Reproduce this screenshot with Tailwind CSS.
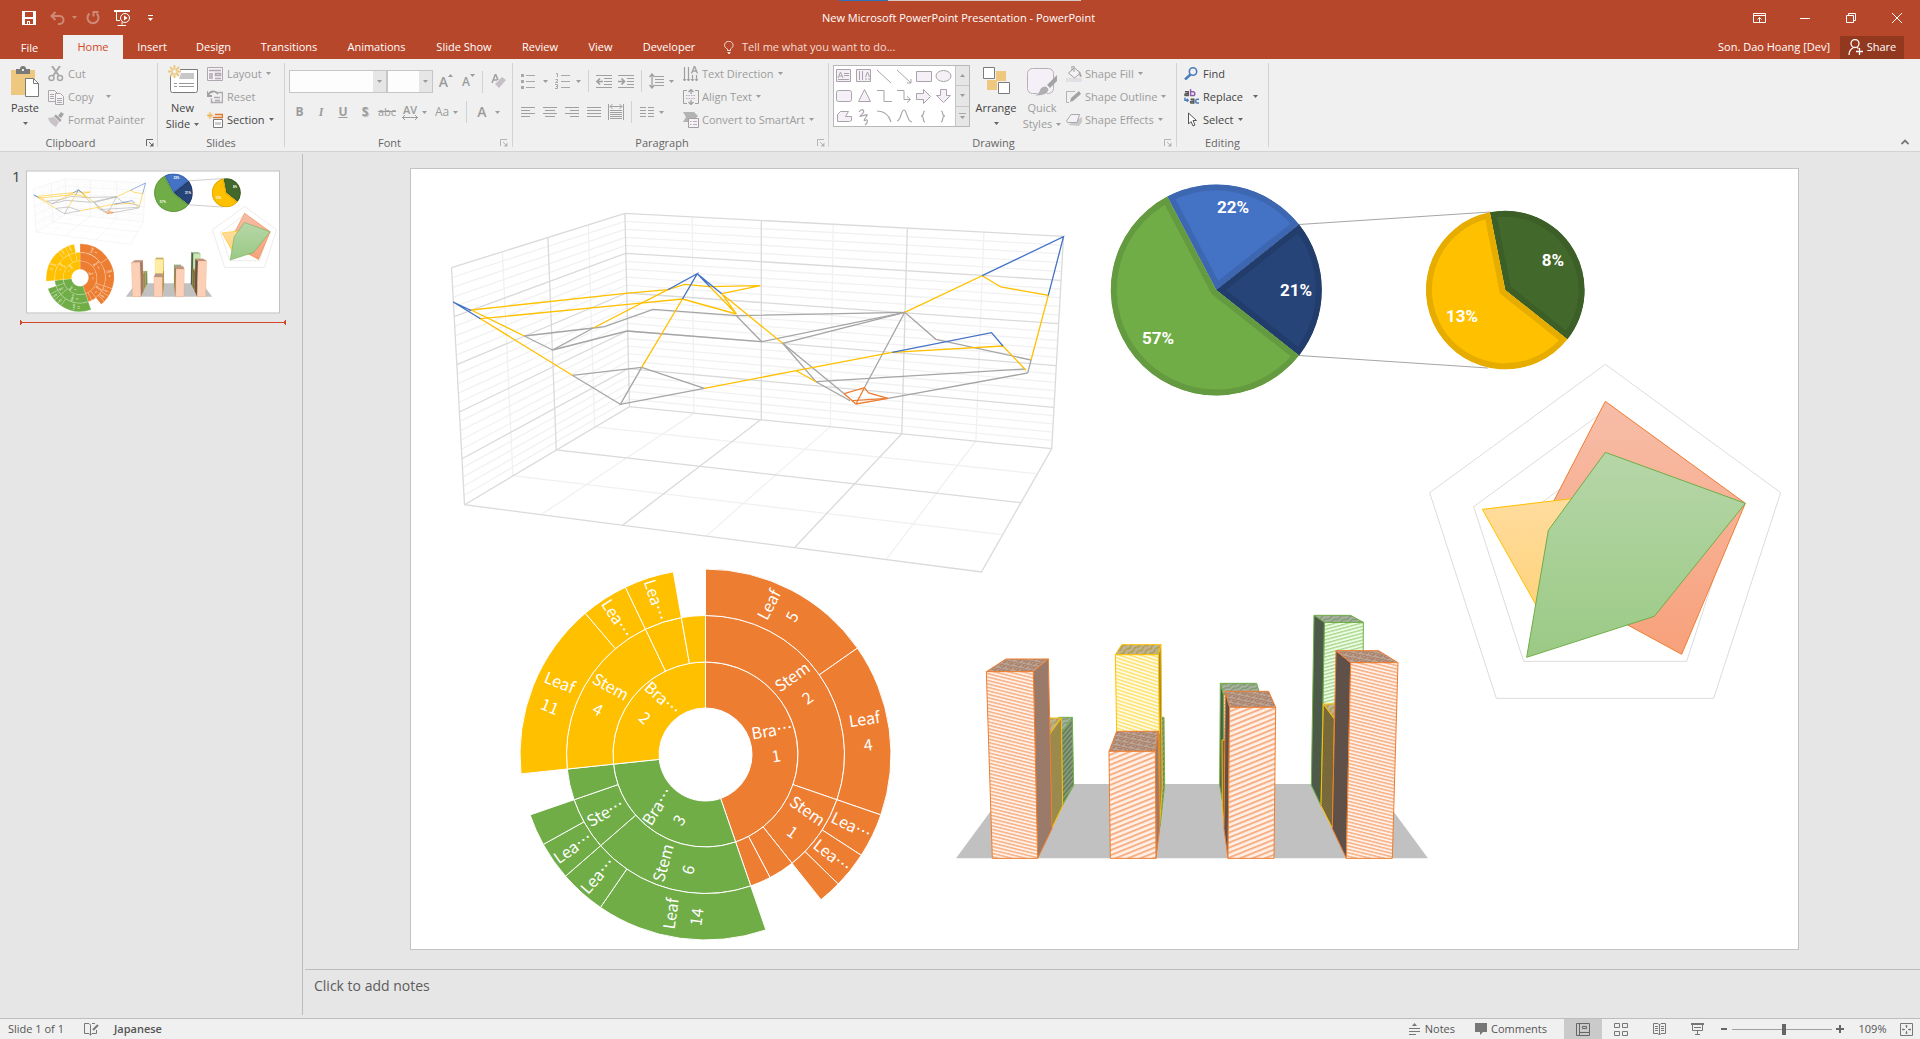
<!DOCTYPE html>
<html lang="en">
<head>
<meta charset="utf-8">
<title>New Microsoft PowerPoint Presentation - PowerPoint</title>
<script src="https://cdn.jsdelivr.net/npm/@tailwindcss/browser@4"></script>
</head>
<body class="flex h-screen flex-col overflow-hidden bg-[#e6e6e6] font-['Open_Sans',sans-serif] text-[11px] leading-4 text-[#444]">

<!-- shared symbols -->
<svg class="absolute size-0" aria-hidden="true">
  <symbol id="caret" viewBox="0 0 5 3"><path d="M0 0h5L2.500 3z" fill="currentColor"/></symbol>
  <symbol id="launch" viewBox="0 0 8 8"><path d="M.5 7V.5H7M3 3l3.500 3.500" fill="none" stroke="currentColor"/><path d="M7.500 3.500v4h-4z" fill="currentColor"/></symbol>
</svg>

<header class="relative bg-[#b7472a] text-white">
  <!-- edge of the hidden screen-sharing bar -->
  <div class="absolute inset-x-0 top-0 flex h-px justify-center"><span class="w-[49px] bg-[#2f6fb7]"></span><span class="w-[193px] bg-[#d8c8c4]"></span></div>
  <div class="flex h-[35px] items-center">
    <div class="flex flex-1 items-center">
      <button aria-label="Save" class="ml-[22px] w-7"><svg class="size-[14px]" viewBox="0 0 14 14"><path d="M0 0h14v14H0z" fill="#fff"/><path d="M3 1h8v5H3zM3 8h8v5H3z" fill="#b7472a"/><path d="M5 10h3v3H5z" fill="#fff"/><path d="M6 11h1v2H6z" fill="#b7472a"/></svg></button>
      <button aria-label="Undo" disabled class="w-[22px] text-[#cf8a77]"><svg class="h-[14px] w-[15px]" viewBox="0 0 15 14"><path d="M5.500 1L1.500 5l4 4M2 5h7.500a4 4 0 010 8H8" fill="none" stroke="currentColor" stroke-width="2"/></svg></button>
      <button aria-label="Undo list" disabled class="w-[14px] text-[#cf8a77]"><svg class="h-[3px] w-[5px]"><use href="#caret"/></svg></button>
      <button aria-label="Redo" disabled class="w-7 text-[#cf8a77]"><svg class="h-[14px] w-[14px]" viewBox="0 0 14 14"><path d="M3.500 2.500a5.500 5.500 0 107 0M7.500 5.500V1h5" fill="none" stroke="currentColor" stroke-width="2"/></svg></button>
      <button aria-label="Start from beginning" class="w-[34px]"><svg class="size-4" viewBox="0 0 16 16" fill="none" stroke="#fff"><path d="M0 1h16" stroke-width="2"/><path d="M2.500 2v8.500H6M8 12v2.500M3.500 15.500H12"/><circle cx="11" cy="8" r="4.500" fill="#b7472a"/><path d="M10 5.500v5l3.500-2.500z" fill="#fff" stroke="none"/></svg></button>
      <button aria-label="Customize Quick Access Toolbar"><svg class="h-[6px] w-[5px]" viewBox="0 0 5 6"><path d="M0 0h5v1H0zM0 3h5L2.500 6z" fill="#fff"/></svg></button>
    </div>
    <h1 class="mr-[3px] text-[11px]">New Microsoft PowerPoint Presentation - PowerPoint</h1>
    <div class="flex flex-1 items-center justify-end">
      <button aria-label="Ribbon display options" class="flex w-[46px] justify-center"><svg class="h-[10px] w-[13px]" viewBox="0 0 13 10" fill="none" stroke="#fff"><path d="M.5.5h12v9H.5zM.5 2.500h12M6.500 9V4.500M4.500 6.500l2-2 2 2"/></svg></button>
      <button aria-label="Minimize" class="flex w-[46px] justify-center"><svg class="h-[10px] w-[10px]" viewBox="0 0 10 10"><path d="M0 5h10v1H0z" fill="#fff"/></svg></button>
      <button aria-label="Restore" class="flex w-[46px] justify-center"><svg class="size-[10px]" viewBox="0 0 10 10" fill="none" stroke="#fff"><path d="M.5 2.500h7v7h-7zM2.500 2V.5h7v7H8"/></svg></button>
      <button aria-label="Close" class="flex w-[46px] justify-center"><svg class="size-[10px]" viewBox="0 0 10 10" fill="none" stroke="#fff"><path d="M0 0l10 10M10 0L0 10"/></svg></button>
    </div>
  </div>
  <div class="flex h-6 items-center">
    <nav class="flex h-full">
      <button class="w-[63px] pr-1 pt-px">File</button>
      <button class="w-[60px] bg-[#f0f0f0] text-[#d24726]">Home</button>
      <button class="w-[58px]">Insert</button>
      <button class="w-[65px]">Design</button>
      <button class="w-[86px]">Transitions</button>
      <button class="w-[89px]">Animations</button>
      <button class="w-[86px]">Slide Show</button>
      <button class="w-[66px]">Review</button>
      <button class="w-[55px]">View</button>
      <button class="w-[82px]">Developer</button>
    </nav>
    <button class="flex items-center gap-2 pl-[14px] text-[#f3dcd5]"><svg class="h-[13px] w-[10px]" viewBox="0 0 10 13" fill="none" stroke="currentColor"><path d="M3.500 9.500V8C1.500 7 .5 5.800.5 4.300a4.300 4 0 018.600 0C9.100 5.800 8 7 6.500 8v1.500zM3.500 11.500h3M4 12.500h2"/></svg>Tell me what you want to do...</button>
    <div class="ml-auto flex h-full items-center gap-[10px] pr-4">
      <span>Son. Dao Hoang [Dev]</span>
      <button class="flex h-[23px] w-16 items-center justify-center gap-1 bg-[#92381f]"><svg class="h-4 w-[15px]" viewBox="0 0 15 16" fill="none" stroke="#fff" stroke-width="1.300"><circle cx="7" cy="4.500" r="4"/><path d="M1 16c0-4 1.500-6 4.500-7.500M9 8.500l1.500 1M11.500 9v7M8 12.500h7"/></svg>Share</button>
    </div>
  </div>
</header>

<!-- ribbon -->
<div class="flex h-[93px] shrink-0 border-b border-[#d2d2d2] bg-[#f0f0f0] text-[#9c9c9c]">
  <section class="flex w-[157px] flex-col">
    <div class="flex h-[76px] pt-[3px]">
      <button class="flex w-12 flex-col items-center pl-2 pr-[6px] pt-1 text-[#444]">
        <svg class="h-[31px] w-7 shrink-0" viewBox="0 0 28 31"><path d="M0 4h24v25H0z" fill="#edc87e"/><path d="M5 8V3h4a3 3 0 016 0h4v5z" fill="#7a7a7a"/><path d="M11 3h2v2h-2z" fill="#f0f0f0"/><path d="M14.500 12.500h8l5 5v13h-13z" fill="#fff" stroke="#7a7a7a"/><path d="M22.500 12.500v5h5" fill="none" stroke="#7a7a7a"/></svg>
        <span class="pt-[3px]">Paste</span><svg class="mt-[6px] h-[3px] w-[5px] text-[#666]"><use href="#caret"/></svg>
      </button>
      <div class="flex flex-col">
        <button class="flex h-[23px] items-center gap-1"><svg class="size-4" viewBox="0 0 16 16" fill="none" stroke="#a8a8a8" stroke-width="1.500"><path d="M4 0l7 10M12 0L5 10" stroke-width="2"/><circle cx="3.500" cy="12" r="2.500"/><circle cx="12" cy="12" r="2.500"/></svg>Cut</button>
        <button class="flex h-[23px] items-center gap-1"><svg class="size-4" viewBox="0 0 16 16" fill="#f6f2f6" stroke="#a8a8a8"><path d="M.5 1.500h6l3 3v8h-9z"/><path d="M7.500 4.500h5l3 3v8h-8z"/><path d="M2 5.500h4M2 7.500h4M2 9.500h4M9 9.500h5M9 11.500h5M9 13.500h5"/></svg>Copy<svg class="ml-2 h-[3px] w-[5px]"><use href="#caret"/></svg></button>
        <button class="flex h-[23px] items-center gap-1"><svg class="size-4" viewBox="0 0 16 16"><path d="M0 6l6-1 5 5-3 5C4 13 1 10 0 6z" fill="#c9c3c9"/><path d="M6 4l6 6 1.500-2L8 2.500zM10 4l3-4 3 2-3 4z" fill="#a3a3a3"/></svg>Format Painter</button>
      </div>
    </div>
    <div class="flex h-4 items-center pr-[3px] text-[#666]"><span class="flex-1 pr-[5px] text-center">Clipboard</span><svg class="size-2"><use href="#launch"/></svg></div>
  </section>
  <div class="my-1 w-px bg-[#d2d2d2]"></div>
  <section class="flex w-[126px] flex-col">
    <div class="flex h-[76px] pt-[3px]">
      <button class="flex w-[49px] flex-col items-center pt-[3px] text-[#444]">
        <svg class="h-7 w-[30px] shrink-0" viewBox="0 0 30 28"><path d="M2.500 4.500h27v21a2 2 0 01-2 2h-23a2 2 0 01-2-2z" fill="#fff" stroke="#7a7a7a"/><path d="M13 8h13v6H11z" fill="#c8c8c8"/><path d="M6 18.500h3M11 18.500h15M6 21.500h3M11 21.500h15" stroke="#999"/><circle cx="6.500" cy="6.500" r="6" fill="#f0f0f0"/><path d="M6.500 0v13M0 6.500h13M2 2l9 9M11 2l-9 9" stroke="#edc87e" stroke-width="1.800"/><circle cx="6.500" cy="6.500" r="2" fill="#f0f0f0"/></svg>
        <span class="pt-[7px]">New</span><span class="flex items-center gap-1">Slide<svg class="h-[3px] w-[5px] text-[#666]"><use href="#caret"/></svg></span>
      </button>
      <div class="flex flex-col">
        <button class="flex h-[23px] items-center gap-1"><svg class="h-[14px] w-4" viewBox="0 0 16 14" fill="#f6f2f6" stroke="#b0a8b0"><path d="M.5.5h15v13H.5z"/><path d="M2 3.500h12M3 6v6M5 6v6M8.500 6.500h5v2h-5zM8 11.500h6" stroke-width="1.500"/></svg>Layout<svg class="h-[3px] w-[5px]"><use href="#caret"/></svg></button>
        <button class="flex h-[23px] items-center gap-1"><svg class="size-4" viewBox="0 0 16 16" fill="none" stroke="#b0a8b0"><path d="M4.500 9.500v4h11v-10h-5M7 8.500h6M8 11.500h5" stroke-width="1.500"/><path d="M1 6c2-4 7-5 10-1M0 2v5h5" stroke="#a0a0a0" stroke-width="1.800"/></svg>Reset</button>
        <button class="flex h-[23px] items-center gap-1 text-[#444]"><svg class="size-4" viewBox="0 0 16 16" fill="#fff"><path d="M8 2.500h7.500v3H6" fill="none" stroke="#e0762a" stroke-width="1.500"/><path d="M6.500 7.500h9v8h-9z" stroke="#7a7a7a"/><path d="M8 10h6v3H8z" fill="#ccc"/><path d="M3 0v7M0 3.500h6M1 1.500l4 4M5 1.500l-4 4" stroke="#edb24e"/></svg>Section<svg class="h-[3px] w-[5px] text-[#666]"><use href="#caret"/></svg></button>
      </div>
    </div>
    <div class="flex h-4 items-center justify-center text-[#666]">Slides</div>
  </section>
  <div class="my-1 w-px bg-[#d2d2d2]"></div>
  <section class="flex w-[227px] flex-col">
    <div class="flex h-[76px] flex-col pl-1 pt-[11px]">
      <div class="flex h-[23px] items-center">
        <div class="relative h-full w-[98px]"><select disabled aria-label="Font" class="h-full w-full appearance-none border border-[#c6c6c6] bg-[#fdfdfd]"></select><span class="pointer-events-none absolute inset-y-px right-px flex w-[13px] items-center justify-center bg-[#e6e6e6]"><svg class="h-[3px] w-[5px]"><use href="#caret"/></svg></span></div>
        <div class="relative h-full w-[46px]"><select disabled aria-label="Font size" class="h-full w-full appearance-none border border-[#c6c6c6] bg-[#fdfdfd]"></select><span class="pointer-events-none absolute inset-y-px right-px flex w-[13px] items-center justify-center bg-[#e6e6e6]"><svg class="h-[3px] w-[5px]"><use href="#caret"/></svg></span></div>
        <button aria-label="Increase font size" class="flex w-5 items-start justify-end text-[14px] font-semibold">A<svg class="h-[3px] w-[5px] rotate-180"><use href="#caret"/></svg></button>
        <button aria-label="Decrease font size" class="flex w-[22px] items-start justify-end text-[12px] font-semibold">A<svg class="h-[3px] w-[5px]"><use href="#caret"/></svg></button>
        <span class="ml-[7px] h-[22px] w-px bg-[#d2d2d2]"></span>
        <button aria-label="Clear formatting" class="ml-2"><svg class="h-[15px] w-4" viewBox="0 0 16 15"><path d="M1 9L4.500 0 7 6M2 6h4" fill="none" stroke="#a0a0a0" stroke-width="1.500"/><path d="M4 10l7-7 4 3-7 8z" fill="#c6c0c6"/></svg></button>
      </div>
      <div class="mt-2 flex h-[22px] items-center text-[12px]">
        <button class="w-[21px] font-bold">B</button><button class="w-[22px] font-bold italic font-['Liberation_Serif',serif]">I</button><button class="w-[22px] font-bold underline">U</button><button class="w-[22px] font-bold text-shadow-[1px_1px_1px_#bbb]">S</button><button class="w-[22px] text-[11px] line-through">abc</button>
        <button aria-label="Character spacing" class="ml-1 flex flex-col items-center text-[11px] font-semibold leading-[10px]">AV<svg class="h-[5px] w-4" viewBox="0 0 16 5"><path d="M0 2.500h16M3 0L.5 2.500 3 5M13 0l2.500 2.500L13 5" fill="none" stroke="currentColor"/></svg></button><svg class="ml-1 h-[3px] w-[5px]"><use href="#caret"/></svg>
        <button class="ml-2">Aa</button><svg class="ml-1 h-[3px] w-[5px]"><use href="#caret"/></svg>
        <span class="ml-2 h-[22px] w-px bg-[#d2d2d2]"></span>
        <button class="ml-[10px] text-[14px] font-semibold">A</button><svg class="ml-2 h-[3px] w-[5px]"><use href="#caret"/></svg>
      </div>
    </div>
    <div class="flex h-4 items-center pr-1 text-[#666]"><span class="flex-1 pr-[6px] text-center">Font</span><svg class="size-2 text-[#b5b5b5]"><use href="#launch"/></svg></div>
  </section>
  <div class="my-1 w-px bg-[#d2d2d2]"></div>
  <section class="flex w-[315px] flex-col">
    <div class="flex h-[76px]">
      <div class="flex w-[170px] flex-col pl-2 pt-[11px]">
        <div class="flex h-[22px] items-center">
          <button aria-label="Bullets"><svg class="h-4 w-[14px]" viewBox="0 0 14 16"><path d="M5 2.500h9M5 8.500h9M5 14.500h9" stroke="#a8a8a8"/><path d="M0 1h3v3H0zM0 7h3v3H0zM0 13h3v3H0z" fill="#a8a8a8"/></svg></button><svg class="ml-2 h-[3px] w-[5px]"><use href="#caret"/></svg>
          <button aria-label="Numbering" class="ml-[7px]"><svg class="h-4 w-[15px]" viewBox="0 0 15 16" fill="none" stroke="#a8a8a8"><path d="M6 2.500h9M6 8.500h9M6 14.500h9M1 .5h1.500V4M.5 6.500h2v1.500L.5 9.500h2.500M0 11.500h2.500v4H0M1 13.500h1.500"/></svg></button><svg class="ml-[6px] h-[3px] w-[5px]"><use href="#caret"/></svg>
          <span class="ml-[7px] h-[22px] w-px bg-[#d2d2d2]"></span>
          <button aria-label="Decrease indent" class="ml-[7px]"><svg class="h-[13px] w-4" viewBox="0 0 16 13" fill="none" stroke="#a0a0a0"><path d="M0 .5h16M8 3.500h8M8 6.500h8M8 9.500h8M0 12.500h16"/><path d="M7 6.500H1.500M4 3.500l-3 3 3 3" stroke-width="1.700"/></svg></button>
          <button aria-label="Increase indent" class="ml-[6px]"><svg class="h-[13px] w-4" viewBox="0 0 16 13" fill="none" stroke="#a0a0a0"><path d="M0 .5h16M9 3.500h7M9 6.500h7M9 9.500h7M0 12.500h16"/><path d="M0 6.500h6M3.500 3.500l3 3-3 3" stroke-width="1.700"/></svg></button>
          <span class="ml-[7px] h-[22px] w-px bg-[#d2d2d2]"></span>
          <button aria-label="Line spacing" class="ml-[7px]"><svg class="h-4 w-[15px]" viewBox="0 0 15 16" fill="none" stroke="#a0a0a0"><path d="M6 3.500h9M6 6.500h9M6 9.500h9M6 12.500h9"/><path d="M3 1v14M.5 4L3 1l2.500 3M.5 12L3 15l2.500-3" stroke-width="1.300"/></svg></button><svg class="ml-[5px] h-[3px] w-[5px]"><use href="#caret"/></svg>
        </div>
        <div class="mt-[9px] flex h-[22px] items-center">
          <button aria-label="Align left"><svg class="h-[11px] w-[14px]" viewBox="0 0 14 11" stroke="#a0a0a0"><path d="M0 .5h14M0 3.500h9M0 6.500h14M0 9.500h9"/></svg></button>
          <button aria-label="Center" class="ml-2"><svg class="h-[11px] w-[14px]" viewBox="0 0 14 11" stroke="#a0a0a0"><path d="M0 .5h14M2 3.500h10M0 6.500h14M2 9.500h10"/></svg></button>
          <button aria-label="Align right" class="ml-2"><svg class="h-[11px] w-[14px]" viewBox="0 0 14 11" stroke="#a0a0a0"><path d="M0 .5h14M5 3.500h9M0 6.500h14M5 9.500h9"/></svg></button>
          <button aria-label="Justify" class="ml-2"><svg class="h-[11px] w-[14px]" viewBox="0 0 14 11" stroke="#a0a0a0"><path d="M0 .5h14M0 3.500h14M0 6.500h14M0 9.500h14"/></svg></button>
          <button aria-label="Distributed" class="ml-[7px]"><svg class="h-4 w-4" viewBox="0 0 16 16" fill="none" stroke="#a0a0a0"><path d="M.5 0v16M15.500 0v16M2 2.500h12M4.500 0L2 2.500 4.500 5M11.500 0L14 2.500 11.500 5M2 6.500h12M2 8.500h12M2 10.500h12M2 12.500h12M2 14.500h12"/></svg></button>
          <span class="ml-[7px] h-[22px] w-px bg-[#d2d2d2]"></span>
          <button aria-label="Columns" class="ml-2"><svg class="h-[11px] w-[14px]" viewBox="0 0 14 11" stroke="#a0a0a0"><path d="M0 .5h6M0 3.500h6M0 6.500h6M0 9.500h6M8 .5h6M8 3.500h6M8 6.500h6M8 9.500h6"/></svg></button><svg class="ml-[5px] h-[3px] w-[5px]"><use href="#caret"/></svg>
        </div>
      </div>
      <div class="flex flex-col pt-[3px]">
        <button class="flex h-[23px] items-center gap-[3px]"><svg class="size-4" viewBox="0 0 16 16" fill="none" stroke="#a0a0a0"><path d="M1.500 1v14M5.500 1v14M9.500 9v6M13.500 9v6" stroke-width="1.200"/><path d="M8.500 7.500L11.500 0l3 7.500M9.500 5h4" stroke-width="1.300"/><path d="M0 13l1.500 2L3 13M4 13l1.500 2L7 13M8 13l1.500 2 1.500-2M12 13l1.500 2 1.500-2"/></svg>Text Direction<svg class="ml-px h-[3px] w-[5px]"><use href="#caret"/></svg></button>
        <button class="flex h-[23px] items-center gap-[3px]"><svg class="size-4" viewBox="0 0 16 16" fill="none" stroke="#a0a0a0"><path d="M4 1.500H.5v13H4M12 1.500h3.500v13H12"/><path d="M3 6.500h10M3 9.500h10" stroke="#b9a9c0" stroke-dasharray="1.500 1"/><path d="M8 0v5M8 11v5M5.500 3L8 .5 10.500 3M5.500 13L8 15.500l2.500-2.500" stroke-width="1.300"/></svg>Align Text<svg class="ml-px h-[3px] w-[5px]"><use href="#caret"/></svg></button>
        <button class="flex h-[23px] items-center gap-[3px]"><svg class="size-4" viewBox="0 0 16 16"><path d="M0 0h11l4 4-2 2H6v4H0l3-5z" fill="#b3b3b3"/><path d="M5.500 6.500h10v9h-10z" fill="#f6f2f6" stroke="#a0a0a0"/><path d="M7 9.500h1.500M10 9.500h4M7 12.500h1.500M10 12.500h4" stroke="#b9a9c0"/></svg>Convert to SmartArt<svg class="ml-px h-[3px] w-[5px]"><use href="#caret"/></svg></button>
      </div>
    </div>
    <div class="flex h-4 items-center pr-[3px] text-[#666]"><span class="flex-1 pr-[6px] text-center">Paragraph</span><svg class="size-2 text-[#b5b5b5]"><use href="#launch"/></svg></div>
  </section>
  <div class="my-1 w-px bg-[#d2d2d2]"></div>
  <section class="flex w-[347px] flex-col">
    <div class="flex h-[76px] pl-1">
      <div class="mt-[6px] flex h-[62px] w-[137px] border border-[#b8b8b8] bg-white">
        <svg class="h-[60px] w-[121px]" viewBox="0 0 121 60" fill="none" stroke="#aaa4aa">
          <g fill="#f5f0f7"><path d="M2.500 3.500h14v12h-14zM22.500 3.500h14v12h-14z"/><path d="M82.500 5.500h15v10h-15z"/><ellipse cx="109.500" cy="10" rx="7.500" ry="5.500"/><rect x="2.500" y="24.500" width="15" height="11" rx="2"/><path d="M30.500 23.500l6 12h-12zM82.500 27.500h7v-4l7 7-7 7v-4h-7zM106.500 23.500h6v6h4l-7 7-7-7h4zM3.500 48.500l3-3h8l-3 5h6v4l-2 1h-12z"/></g>
          <path d="M4 12l2.500-6L9 12M5 10h3M10 7.500h5M10 9.500h5M4 13.500h11M25.500 5v9M28.500 5v9M31.500 11l2-5 2 5M32 12v2M35 12v2"/>
          <path d="M43 4l14 13M63 4l14 13M73 17h4v-4"/>
          <path d="M43 24.500h7v11h8M63 24.500h7v9h6M73 30.500l3.500 3-3.500 3"/>
          <path d="M25 46c3-4 6-2 4 1s-5 4-1 3 7-3 4 1-2 4 0 3 2 3-1 5M43 45c7 0 12 4 14 11M63 55c4 0 4-11 7-11s3 12 8 12M91 45c-3 0 0 5-4 5 4 0 1 6 4 6M107 45c3 0 0 5 4 5-4 0-1 6-4 6" stroke-width="1.200"/>
        </svg>
        <div class="flex flex-1 flex-col divide-y divide-[#c6c6c6] border-l border-[#c6c6c6] bg-[#e6e6e6]">
          <button aria-label="Scroll up" class="flex flex-1 items-center justify-center"><svg class="h-[3px] w-[5px] rotate-180"><use href="#caret"/></svg></button>
          <button aria-label="Scroll down" class="flex flex-1 items-center justify-center"><svg class="h-[3px] w-[5px]"><use href="#caret"/></svg></button>
          <button aria-label="More shapes" class="flex flex-1 flex-col items-center justify-center gap-[2px]"><span class="h-px w-[7px] bg-[#a8a8a8]"></span><svg class="h-[3px] w-[5px]"><use href="#caret"/></svg></button>
        </div>
      </div>
      <button class="flex w-[52px] flex-col items-center pt-2 text-[#444]">
        <svg class="h-[27px] w-[27px] shrink-0" viewBox="0 0 27 27"><path d="M13 4h10v10H13zM4 13h10v10H4z" fill="#edc87e"/><path d="M.5.5h11v11H.5zM15.500 15.500h11v11h-11z" fill="#fff" stroke="#7a7a7a"/></svg>
        <span class="pt-[6px]">Arrange</span><svg class="mt-[6px] h-[3px] w-[5px] text-[#666]"><use href="#caret"/></svg>
      </button>
      <button class="flex w-[42px] flex-col items-center pt-[9px] pr-[2px]">
        <svg class="h-[29px] w-[30px] shrink-0" viewBox="0 0 30 29"><rect x=".5" y=".5" width="26" height="25" rx="5" fill="#f5f0f7" stroke="#b8b2b8"/><path d="M30 7v6l-7 7-3-3z" fill="#a3a3a3"/><path d="M19 18l3 3c-1 6-7 7-15 7 4-2 5-4 6-7 1-2 4-3 6-3z" fill="#b0b0b0" stroke="#f0f0f0"/></svg>
        <span class="pt-[3px]">Quick</span><span class="flex items-center gap-1">Styles<svg class="h-[3px] w-[5px]"><use href="#caret"/></svg></span>
      </button>
      <div class="flex flex-col pl-[2px] pt-[3px]">
        <button class="flex h-[23px] items-center gap-[3px]"><svg class="size-4" viewBox="0 0 16 16"><path d="M0 12h16v4H0z" fill="#e4dfe6"/><path d="M2.500 7l6-5 6 5-6 5zM8 6V0H6v4" fill="#f6f2f6" stroke="#a0a0a0"/><path d="M12 4l4 6-2 1z" fill="#a0a0a0"/></svg>Shape Fill<svg class="ml-px h-[3px] w-[5px]"><use href="#caret"/></svg></button>
        <button class="flex h-[23px] items-center gap-[3px]"><svg class="size-4" viewBox="0 0 16 16"><path d="M9 2.500H.5v11H3" fill="none" stroke="#b8b2b8"/><path d="M4 13l1-4 8-7 2 3-8 7z" fill="#a3a3a3"/></svg>Shape Outline<svg class="ml-px h-[3px] w-[5px]"><use href="#caret"/></svg></button>
        <button class="flex h-[23px] items-center gap-[3px]"><svg class="size-4" viewBox="0 0 16 16"><path d="M2 13l11 1 3-4V5z" fill="#c9c9c9"/><path d="M5 2.500h8.500L11 10.500H1.500L.5 9z" fill="#f5f0f7" stroke="#a8a8a8"/></svg>Shape Effects<svg class="ml-px h-[3px] w-[5px]"><use href="#caret"/></svg></button>
      </div>
    </div>
    <div class="flex h-4 items-center pr-1 text-[#666]"><span class="flex-1 pr-[6px] text-center">Drawing</span><svg class="size-2 text-[#b5b5b5]"><use href="#launch"/></svg></div>
  </section>
  <div class="my-1 w-px bg-[#d2d2d2]"></div>
  <section class="flex w-[91px] flex-col text-[#444]">
    <div class="flex h-[76px] flex-col pl-[7px] pt-[3px]">
      <button class="flex h-[23px] items-center gap-[5px]"><svg class="h-[13px] w-[14px]" viewBox="0 0 14 13" fill="none" stroke="#4a7ebb"><circle cx="9" cy="4.500" r="3.700" stroke-width="1.600"/><path d="M6.500 7.500L1 12.500" stroke-width="2.500"/></svg>Find</button>
      <button class="flex h-[23px] items-center gap-1"><svg class="h-[15px] w-[15px]" viewBox="0 0 16 16" fill="none" stroke-width="1.500"><path d="M1 3h3.500v4H2c-1.500 0-1.500-2 0-2h2M7 11h3.500v4H8c-1.500 0-1.500-2 0-2h2.500" stroke="#555"/><path d="M7 0v7h2.500a2 2 0 000-4H7" stroke="#8e5bb0"/><path d="M16 11h-1.500a2 2 0 000 4H16M1 9v3h3.500M3 10.500L4.500 12 3 13.500" stroke="#4a7ebb"/></svg>Replace<svg class="ml-[6px] h-[3px] w-[5px] text-[#666]"><use href="#caret"/></svg></button>
      <button class="flex h-[23px] items-center gap-[5px]"><svg class="h-[15px] w-[14px]" viewBox="0 0 14 15"><path d="M4.500 1v11l2.500-2.500 2 4.500 2-1-2-4.500h3.500z" fill="#fff" stroke="#555"/></svg>Select<svg class="h-[3px] w-[5px] text-[#666]"><use href="#caret"/></svg></button>
    </div>
    <div class="flex h-4 items-center justify-center text-[#666]">Editing</div>
  </section>
  <div class="my-1 w-px bg-[#d2d2d2]"></div>
  <button aria-label="Collapse the ribbon" class="ml-auto mr-[11px] mt-auto mb-[6px]"><svg class="h-[6px] w-2" viewBox="0 0 8 6"><path d="M.5 5L4 1.500 7.500 5" fill="none" stroke="#777" stroke-width="1.800"/></svg></button>
</div>

<!-- workspace -->
<main class="flex min-h-0 flex-1 pb-[3px]">
  <aside class="mt-[2px] flex w-[303px] shrink-0 flex-col border-r border-[#bdbdbd] pt-4">
    <div class="flex items-start pl-3">
      <span class="w-[14px] text-[15px] leading-3">1</span>
      <svg class="h-[144px] w-[254px] [--edge:9] [--link:3] [--line:3]" viewBox="410 168 1389 782" role="img" aria-label="Slide 1"><use href="#slide"/><rect x="413" y="171" width="1383" height="776" fill="none" stroke="#bfbfbf" stroke-width="5"/></svg>
    </div>
    <svg class="ml-5 mt-[6px] h-[5px] w-[266px]" viewBox="0 0 266 5"><path d="M0 2h266v1H0zM0 0h1v5H0zM265 0h1v5h-1zM1 1h1v3H1zM264 1h1v3h-1z" fill="#d24726"/></svg>
  </aside>
  <div class="flex min-w-0 flex-1 flex-col">
    <div class="min-h-0 flex-1 pb-[19px] pl-[2px] pr-4 pt-4">
      <svg class="h-full w-full [--edge:3] [--link:1] [--line:1.3]" viewBox="410 168 1389 782" role="img" aria-label="Slide with charts">
        <defs>
          <linearGradient id="gO" x2="0" y2="1"><stop stop-color="#f7bda8"/><stop offset="1" stop-color="#f7a17b"/></linearGradient>
          <linearGradient id="gY" x2="0" y2="1"><stop stop-color="#ffdd9f"/><stop offset="1" stop-color="#ffd176"/></linearGradient>
          <linearGradient id="gG" x2="0" y2="1"><stop stop-color="#b6d6a8"/><stop offset="1" stop-color="#9bca85"/></linearGradient>
          <pattern id="oF" width="30" height="10" patternUnits="userSpaceOnUse" patternTransform="rotate(14)"><path d="M0 0h30v10H0z" fill="#fff1e8"/><path d="M0 0h30v4.500H0z" fill="#f7b085"/></pattern>
          <pattern id="oG" width="30" height="14" patternUnits="userSpaceOnUse" patternTransform="rotate(-22)"><path d="M0 0h30v14H0z" fill="#fff1e8"/><path d="M0 0h30v6H0z" fill="#f7b085"/></pattern>
          <pattern id="yF" width="30" height="10" patternUnits="userSpaceOnUse" patternTransform="rotate(18)"><path d="M0 0h30v10H0z" fill="#fffbe0"/><path d="M0 0h30v4H0z" fill="#ffdf66"/></pattern>
          <pattern id="gF" width="30" height="10" patternUnits="userSpaceOnUse" patternTransform="rotate(-15)"><path d="M0 0h30v10H0z" fill="#edfce4"/><path d="M0 0h30v4H0z" fill="#a6d68a"/></pattern>
          <pattern id="oS" width="8" height="6" patternUnits="userSpaceOnUse" patternTransform="rotate(-35)"><path d="M0 0h8v6H0z" fill="#8f8078"/><path d="M0 0h8v3H0z" fill="#a5745a"/></pattern>
          <pattern id="oD" width="8" height="6" patternUnits="userSpaceOnUse" patternTransform="rotate(35)"><path d="M0 0h8v6H0z" fill="#54504e"/><path d="M0 0h8v3H0z" fill="#6b5143"/></pattern>
          <pattern id="yS" width="8" height="6" patternUnits="userSpaceOnUse" patternTransform="rotate(-40)"><path d="M0 0h8v6H0z" fill="#8d8564"/><path d="M0 0h8v3H0z" fill="#a98f35"/></pattern>
          <pattern id="yD" width="8" height="6" patternUnits="userSpaceOnUse" patternTransform="rotate(40)"><path d="M0 0h8v6H0z" fill="#68614a"/><path d="M0 0h8v3H0z" fill="#88712c"/></pattern>
          <pattern id="gS" width="8" height="10" patternUnits="userSpaceOnUse" patternTransform="rotate(-50)"><path d="M0 0h8v10H0z" fill="#8c9886"/><path d="M0 0h8v5H0z" fill="#638053"/></pattern>
          <pattern id="gD" width="8" height="6" patternUnits="userSpaceOnUse" patternTransform="rotate(35)"><path d="M0 0h8v6H0z" fill="#4c544b"/><path d="M0 0h8v3H0z" fill="#4d6046"/></pattern>
          <pattern id="oT" width="22" height="14" patternUnits="userSpaceOnUse" patternTransform="rotate(12)"><path d="M0 0h22v14H0z" fill="#baa99e"/><path d="M0 3l6 3 5-3 6 4 5-3M2 11l5-2 6 3 7-3" fill="none" stroke="#a9775a" stroke-width="3"/></pattern>
          <pattern id="yT" width="24" height="14" patternUnits="userSpaceOnUse" patternTransform="rotate(-40)"><path d="M0 0h24v14H0z" fill="#bcb394"/><path d="M0 3q6 5 12 0t12 0" fill="none" stroke="#b5953a" stroke-width="4"/></pattern>
          <pattern id="gT" width="24" height="12" patternUnits="userSpaceOnUse" patternTransform="rotate(-25)"><path d="M0 0h24v12H0z" fill="#a5af9f"/><path d="M0 3q6 5 12 0t12 0" fill="none" stroke="#6e9258" stroke-width="3"/></pattern>
        </defs>
        <g id="slide">
          <rect x="410.500" y="168.500" width="1388" height="781" fill="#fff" stroke="#c3c3c3"/>
          <g id="lines" fill="none"></g>
          <g id="sunburst" font-family="'Noto Sans CJK JP',sans-serif" font-size="16" font-weight="400" fill="#fff" text-anchor="middle"></g>
          <!-- pie of pie -->
          <path class="[stroke-width:var(--link)]" d="M1299 224.500L1490 212M1299 355.500L1488 368" stroke="#a6a6a6"/>
          <g id="pies"></g>
          <g font-family="Roboto,sans-serif" font-size="17" font-weight="700" fill="#fff" text-anchor="middle">
            <text x="1233" y="213">22%</text><text x="1296" y="296">21%</text><text x="1158" y="344">57%</text><text x="1553" y="266">8%</text><text x="1462" y="322">13%</text>
          </g>
          <!-- radar -->
          <g class="[stroke-width:var(--edge)]" transform="translate(1400 350) scale(.33333)">
            <path d="M616 43l526 385-201 617H289L89 428zM616 181l395 289-151 464H371L221 470zM616 319l263 191-101 311H453L353 510z" fill="none" stroke="#dcdcdc"/>
            <path d="M616 154l420 306-191 453-329-179-96-201z" fill="url(#gO)" stroke="#ed7d31"/>
            <path d="M247 478l369-44 184 106-100 160-255 131z" fill="url(#gY)" stroke="#ffc000"/>
            <path d="M616 307l420 153-273 339-383 123 65-381z" fill="url(#gG)" stroke="#70ad47"/>
          </g>
          <!-- 3-D columns -->
          <g transform="translate(930 600) scale(.33333)" stroke-width="3" stroke-linejoin="round">
            <path d="M242 552H1330L1494 775H78z" fill="#c1c1c1"/>
            <g stroke="#70ad47"><path d="M385 352h42l-32 45z" fill="url(#gT)"/><path d="M395 397l32-45 4 204-33 59z" fill="url(#gS)"/><path d="M690 352h12l2 204-14 124z" fill="url(#gS)"/></g>
            <g stroke="#ffc000"><path d="M345 354h49l-36 50z" fill="url(#yT)"/><path d="M358 404l36-50 4 263-33 69z" fill="url(#yS)"/></g>
            <g stroke="#ed7d31"><path d="M169 215l59-38h127l-45 38z" fill="url(#oT)"/><path d="M310 215l45-38 11 509-43 89z" fill="url(#oS)"/><path d="M169 215h141l13 560H187z" fill="url(#oF)"/></g>
            <g stroke="#ffc000"><path d="M556 164l19-30h118l-8 30z" fill="url(#yT)"/><path d="M685 164l8-30 4 426-9 126z" fill="url(#yS)"/><path d="M556 164h129l3 236H560z" fill="url(#yF)"/></g>
            <g stroke="#ed7d31"><path d="M537 454l23-60h125l-9 60z" fill="url(#oT)"/><path d="M676 454l9-60 4 292-11 89z" fill="url(#oS)"/><path d="M537 454h139l2 321H541z" fill="url(#oG)"/></g>
            <g stroke="#70ad47"><path d="M880 284h110v310H882z" fill="url(#gF)"/><path d="M871 250h109l10 34H880z" fill="url(#gT)"/><path d="M871 250l9 34v336l-11-64z" fill="url(#gD)"/></g>
            <path d="M876 420h14l-6 50v220l-7-70z" fill="url(#yD)" stroke="#ffc000"/>
            <g stroke="#ed7d31"><path d="M886 274l13 48-5 453-12-89z" fill="url(#oD)"/><path d="M886 274h130l21 48H899z" fill="url(#oT)"/><path d="M899 322h138l-5 453H894z" fill="url(#oG)"/></g>
            <g stroke="#70ad47"><path d="M1183 67h117l-2 400-125 150z" fill="url(#gF)"/><path d="M1152 46h110l38 21h-117z" fill="url(#gT)"/><path d="M1152 46l31 21-10 550-29-61z" fill="url(#gD)"/></g>
            <g stroke="#ffc000"><path d="M1180 312h50v45h-17z" fill="url(#yT)"/><path d="M1180 312l33 45-5 329-35-69z" fill="url(#yD)"/></g>
            <g stroke="#ed7d31"><path d="M1218 152l44 36-13 587-42-89z" fill="url(#oD)"/><path d="M1218 152h128l58 36h-142z" fill="url(#oT)"/><path d="M1262 188h142l-17 587h-138z" fill="url(#oF)"/></g>
          </g>
        </g>
      </svg>
    </div>
    <div class="ml-[2px] h-[46px] shrink-0 border-t border-[#bdbdbd] pl-[9px] pt-1">
      <input aria-label="Notes" placeholder="Click to add notes" class="w-full bg-transparent text-[14px] leading-6 placeholder:text-[#5c5c5c]">
    </div>
  </div>
</main>

<footer class="flex h-[21px] shrink-0 items-center border-t border-[#bdbdbd] bg-[#f0f0f0] text-[#555]">
  <span class="w-[84px] pl-2">Slide 1 of 1</span>
  <button aria-label="Spelling" class="w-[30px]"><svg class="h-[13px] w-[15px]" viewBox="0 0 15 13" fill="none" stroke="#777"><path d="M6.500 12.500V2L5 .5H.5v10H5l1.500 1.500M8 .5h3M12.500 7v3.500H8L6.500 12"/><path d="M9 7l5-5" stroke-width="2"/></svg></button>
  <button class="font-semibold">Japanese</button>
  <div class="ml-auto flex h-full items-center">
    <button class="flex items-center gap-[5px] font-medium"><svg class="h-3 w-[11px]" viewBox="0 0 11 12"><path d="M0 5h11v1H0zM0 8h11v1H0zM0 11h7v1H0zM3 3l2.500-3L8 3z" fill="#777"/></svg>Notes</button>
    <button class="ml-[20px] flex items-center gap-[4px] font-medium"><svg class="h-3 w-3" viewBox="0 0 12 12"><path d="M0 0h12v9H8l-3 3V9H0z" fill="#777"/></svg>Comments</button>
    <div class="ml-[17px] flex h-full">
      <button aria-label="Normal" class="flex w-[38px] items-center justify-center bg-[#cacaca]"><svg class="h-[13px] w-[14px]" viewBox="0 0 14 13" fill="none" stroke="#666"><path d="M.5.5h13v12H.5zM3.500 0v13M4 9.500h9M6.500 3.500h4v2h-4z"/></svg></button>
      <button aria-label="Slide sorter" class="flex w-[38px] items-center justify-center"><svg class="h-[13px] w-[14px]" viewBox="0 0 14 13" fill="none" stroke="#777"><path d="M.5.500h5v4h-5zM8.500.500h5v4h-5zM.5 8.500h5v4h-5zM8.500 8.500h5v4h-5z"/></svg></button>
      <button aria-label="Reading view" class="flex w-[38px] items-center justify-center"><svg class="h-[12px] w-[13px]" viewBox="0 0 13 12" fill="none" stroke="#777"><path d="M6.500 1.500V12L5 10.500H.5V.5H5L6.500 2 8 .5h4.500v10H8L6.500 12M2 3.500h3M2 5.500h3M2 7.500h3M8 3.500h3M8 5.500h3M8 7.500h3"/></svg></button>
      <button aria-label="Slide show" class="flex w-[38px] items-center justify-center"><svg class="h-[12px] w-[13px]" viewBox="0 0 13 12" fill="none" stroke="#777"><path d="M0 1h13" stroke-width="2"/><path d="M1.500 2v5.500h10V2M3 4.500h7M6.500 8v3M4 11.500h5"/></svg></button>
    </div>
    <button aria-label="Zoom out" class="flex w-4 justify-center"><span class="h-[2px] w-[6px] bg-[#666]"></span></button>
    <input type="range" aria-label="Zoom" min="0" max="100" value="52" class="h-3 w-[100px] appearance-none bg-[linear-gradient(#a0a0a0,#a0a0a0)] bg-[length:100%_1px] bg-center bg-no-repeat [&::-webkit-slider-thumb]:h-[11px] [&::-webkit-slider-thumb]:w-1 [&::-webkit-slider-thumb]:appearance-none [&::-webkit-slider-thumb]:bg-[#666]">
    <button aria-label="Zoom in" class="flex w-4 justify-center"><svg class="size-2" viewBox="0 0 8 8"><path d="M3 0h2v3h3v2H5v3H3V5H0V3h3z" fill="#666"/></svg></button>
    <button class="w-[52px] pr-[3px]">109%</button>
    <button aria-label="Fit slide to window" class="mr-[7px]"><svg class="size-[13px]" viewBox="0 0 13 13" fill="none" stroke="#777"><path d="M.5.5h12v12H.5z"/><path d="M6.500 2v3M6.500 8v3M2 6.500h3M8 6.500h3M5.500 3h2M5.500 10h2M3 5.500v2M10 5.500v2"/></svg></button>
  </div>
</footer>

<script>
const NS = 'http://www.w3.org/2000/svg';
function add(parent, tag, attrs, text) {
  const el = document.createElementNS(NS, tag);
  for (const k in attrs) el.setAttribute(k, attrs[k]);
  if (text) el.textContent = text;
  parent.appendChild(el);
  return el;
}
const polar = (cx, cy, r, a) => [cx + r * Math.sin(a * Math.PI / 180), cy - r * Math.cos(a * Math.PI / 180)];

// sunburst: [ring, start, end, colour, name, value]
const O = '#ed7d31', G = '#70ad47', Y = '#ffc000';
const radii = [46.5, 92.5, 139, 185.5];
[
  [0, 0, 161, O, 'Bra…', '1'], [0, 161, 264, G, 'Bra…', '3'], [0, 264, 360, Y, 'Bra…', '2'],
  [1, 0, 109, O, 'Stem', '2'], [1, 109, 141.5, O, 'Stem', '1'], [1, 141.5, 152.3, O], [1, 152.3, 161, O],
  [1, 161, 229, G, 'Stem', '6'], [1, 229, 251, G, 'Ste…'], [1, 251, 264, G],
  [1, 264, 334.4, Y, 'Stem', '4'], [1, 334.4, 350, Y], [1, 350, 360, Y],
  [2, 0, 55, O, 'Leaf', '5'], [2, 55, 109, O, 'Leaf', '4'], [2, 109, 122.9, O, 'Lea…'], [2, 122.9, 134.3, O, 'Lea…'], [2, 134.3, 141.5, O],
  [2, 161, 214.5, G, 'Leaf', '14'], [2, 214.5, 229, G, 'Lea…'], [2, 229, 241, G, 'Lea…'], [2, 241, 251, G],
  [2, 264, 319.6, Y, 'Leaf', '11'], [2, 319.6, 334.4, Y, 'Lea…'], [2, 334.4, 350, Y, 'Lea…']
].forEach(([ring, a, b, fill, name, value]) => {
  const g = document.getElementById('sunburst'), cx = 705.5, cy = 754.5;
  const r0 = radii[ring], r1 = radii[ring + 1], big = b - a > 180 ? 1 : 0;
  const p = [polar(cx, cy, r0, a), polar(cx, cy, r1, a), polar(cx, cy, r1, b), polar(cx, cy, r0, b)];
  add(g, 'path', { d: `M${p[0]}L${p[1]}A${r1} ${r1} 0 ${big} 1 ${p[2]}L${p[3]}A${r0} ${r0} 0 ${big} 0 ${p[0]}z`, fill, stroke: '#fff' });
  if (!name) return;
  const mid = (a + b) / 2, [x, y] = polar(cx, cy, (r0 + r1) / 2, mid);
  const t = add(g, 'g', { transform: `translate(${x} ${y}) rotate(${mid > 180 ? mid - 270 : mid - 90})` });
  add(t, 'text', { y: value ? -7 : 6, lang: 'ja' }, name);
  if (value) add(t, 'text', { y: 19 }, value);
});

// pies: [cx, cy, r, start, end, fill, rim]
[
  [1216.3, 290, 105.5, -27.7, 51.7, '#4472c4', '#3d67b1'], [1216.3, 290, 105.5, 51.7, 128.3, '#264478', '#223d6c'], [1216.3, 290, 105.5, 128.3, 332.3, '#70ad47', '#659b40'],
  [1505.3, 290, 79.3, -11.2, 128.5, '#43682b', '#3c5e27'], [1505.3, 290, 79.3, 128.5, 348.8, '#ffc000', '#e6ad00']
].forEach(([cx, cy, r, a, b, fill, stroke], i) => {
  const g = document.getElementById('pies');
  const d = `M${cx} ${cy}L${polar(cx, cy, r, a)}A${r} ${r} 0 ${b - a > 180 ? 1 : 0} 1 ${polar(cx, cy, r, b)}z`;
  add(add(g, 'clipPath', { id: 'wedge' + i }), 'path', { d });
  add(g, 'path', { d, fill, stroke, 'stroke-width': 12, 'clip-path': `url(#wedge${i})` });
});

// 3-D line chart
const chart = document.getElementById('lines');
const at = (x, y) => [430 + x / 2.3758, 190 + y / 3].map(v => v.toFixed(1));
const line = (stroke, pts, width = 1.3) => {
  let d = '';
  for (let i = 0; i < pts.length; i += 2) d += (i ? 'L' : 'M') + at(pts[i], pts[i + 1]);
  add(chart, 'path', { d, stroke, style: `stroke-width:${width}` });
};
const series = (stroke, pts) => line(stroke, pts, 'var(--line)');
const major = '#dadada', minor = '#f1f1f1';
const L = [[51,233],[57,380],[64,524],[70,666],[76,806],[82,944]];
const B = [[463,70],[465,190],[467,309],[469,423],[471,536],[474,650]];
const R = [[1505,139],[1499,271],[1494,401],[1488,527],[1482,652],[1477,776]];
const mix = (p, q, t) => [p[0] + (q[0] - p[0]) * t, p[1] + (q[1] - p[1]) * t];
for (let i = 0; i < 5; i++) for (let k = 1; k < 5; k++)
  line(minor, [L, B, R].flatMap(w => mix(w[i], w[i + 1], k / 5)));
[[172,185,197,857,1360,1034],[376,106,391,711,1441,851],[623,82,627,670,266,972],[958,104,951,710,657,1038],[1316,129,1297,753,1084,1108]].forEach(p => line(minor, p));
[[280,142,300,780,1404,938],[787,93,787,688,458,1005],[1134,115,1121,731,867,1072],[463,70,474,650],[51,233,82,944,1310,1146,1477,776,1505,139]].forEach(p => line(major, p));
for (let i = 0; i < 6; i++) line(major, [...L[i], ...B[i], ...R[i]]);
const grey = '#a5a5a5', blue = '#4472c4';
[[224,438,291,480],[338,556,452,643],[224,438,388,414,415,410,530,358,730,377,1128,367],[291,480,388,414],[291,480,468,423,788,455,1128,367],
 [338,556,503,532,652,595,452,643,503,532],[728,377,788,455],[984,611,838,460,1128,367],[838,460,917,575,998,632],[917,575,1414,537],[1420,549,1088,625],
 [1032,593,1128,367,1202,448,1428,510,1420,549]].forEach(p => series(grey, p));
[[565,299,465,310,98,360,224,438],[565,299,605,283,665,290,785,287,693,311],[338,556,120,386,470,343,600,327,728,372],[388,414,565,299],[503,532,600,327],
 [665,290,728,372,693,311,838,460],[652,595,870,542,1098,487,1361,468,1416,541],[870,542,917,575],[1128,367,1312,257,1356,291,1469,316,1428,510]].forEach(p => series(Y, p));
[[98,362,55,336,120,386],[565,299,635,251,600,327],[665,290,635,251,693,311],[1098,487,1334,428,1361,468],[1312,257,1505,140,1469,316]].forEach(p => series(blue, p));
[[984,611,1032,593,1042,609,1088,625,1012,642,984,611],[1088,625,1003,632],[1032,593,1012,642]].forEach(p => series(O, p));
</script>
</body>
</html>
